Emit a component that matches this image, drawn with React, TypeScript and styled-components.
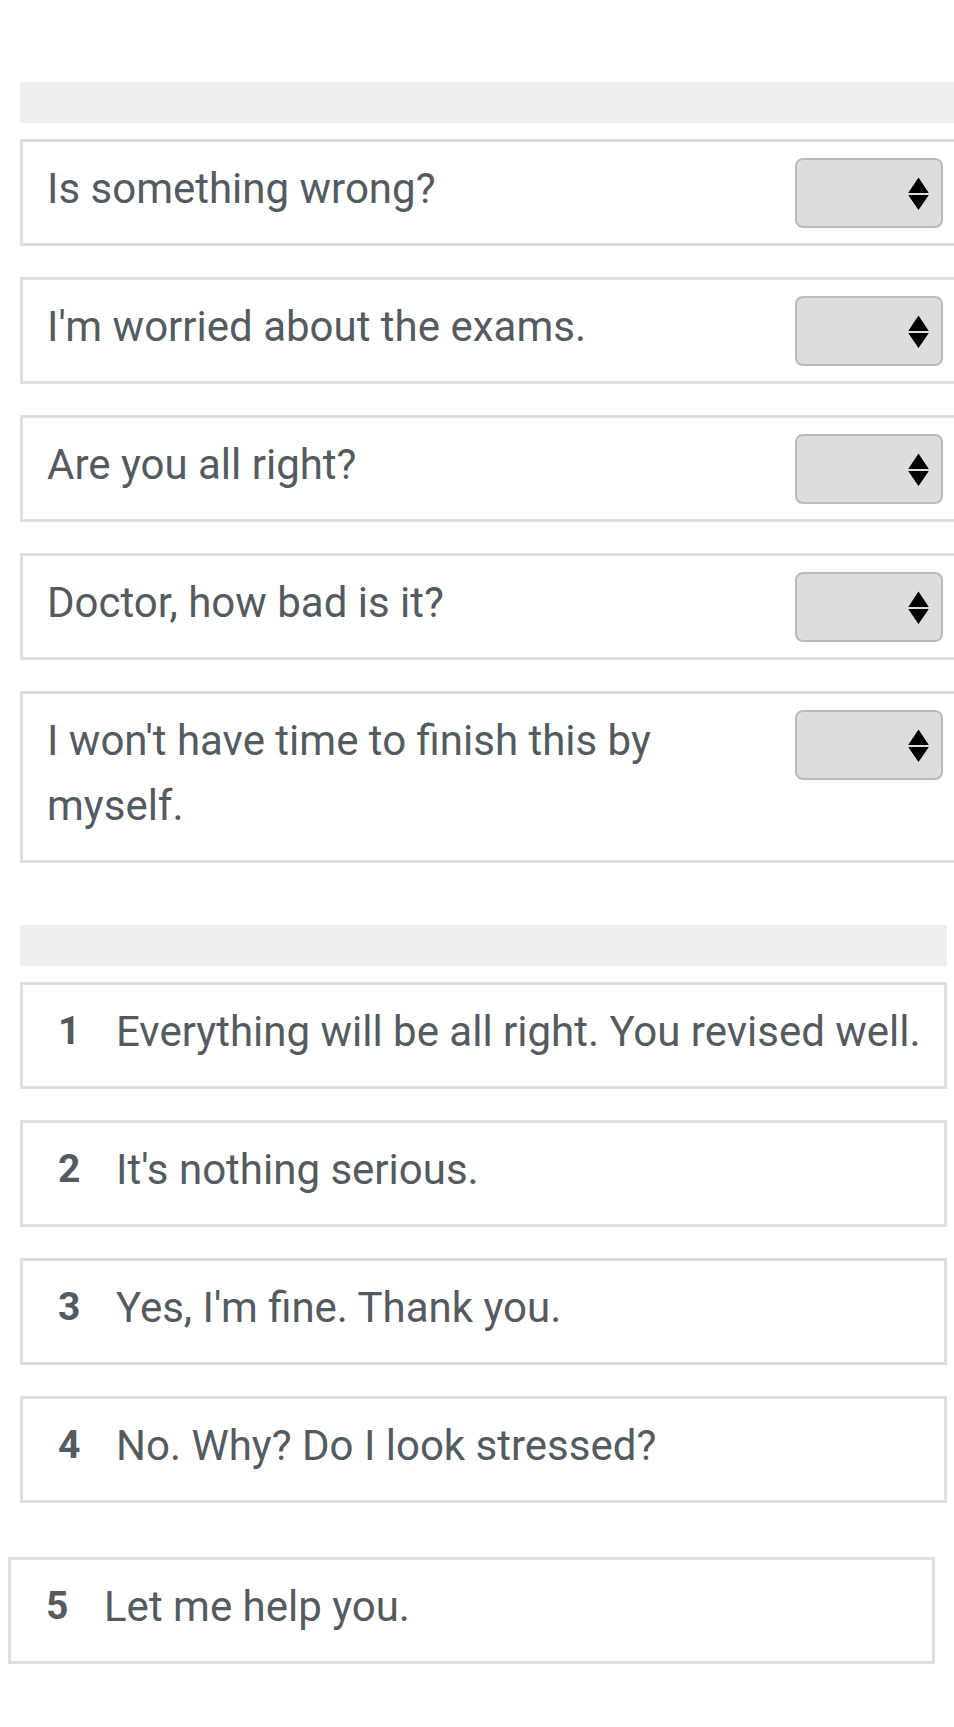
import React from "react";
import styled, { createGlobalStyle } from "styled-components";

const Global = createGlobalStyle`
  html, body {
    margin: 0;
    padding: 0;
    background: #ffffff;
    overflow-x: hidden;
  }
  body {
    font-family: Roboto, "Noto Sans", Arial, sans-serif;
    color: #535b61;
  }
`;

const Page = styled.div`
  width: 954px;
  overflow: hidden;
  padding: 82px 0 60px 20px;
  box-sizing: border-box;
`;

const Section = styled.section<{ $width: number }>`
  width: ${(p) => p.$width}px;
  display: flex;
  flex-direction: column;
  gap: 31px;
`;

const HeaderBar = styled.div`
  height: 41px;
  background: #eeeeee;
  margin-bottom: -15px;
`;

const QuestionRow = styled.div`
  display: flex;
  align-items: flex-start;
  border: 3px solid #dedede;
  background: #ffffff;
`;

const Prompt = styled.div`
  flex: 1;
  padding: 14px 40px 22px 24px;
  font-size: 42px;
  line-height: 65px;
  color: #535b61;
`;

const SelectBox = styled.div`
  flex: none;
  width: 148px;
  height: 70px;
  box-sizing: border-box;
  margin: 16px 14px 0 0;
  border: 2px solid #bababa;
  border-radius: 8px;
  background: #dddddd;
  display: flex;
  align-items: center;
  justify-content: flex-end;
  padding-right: 12px;
`;

const AnswerRow = styled.div<{ $shift?: number }>`
  display: flex;
  align-items: center;
  height: 107px;
  box-sizing: border-box;
  border: 3px solid #dedede;
  background: #ffffff;
  padding: 0 20px 8px 35px;
  margin: ${(p) => (p.$shift ? 23 : 0)}px ${(p) => p.$shift ?? 0}px 0
    ${(p) => -(p.$shift ?? 0)}px;
`;

const Num = styled.span`
  flex: none;
  width: 58px;
  font-size: 39px;
  font-weight: 700;
  line-height: 65px;
  color: #535b61;
`;

const AnswerText = styled.span`
  font-size: 42px;
  line-height: 65px;
  color: #535b61;
  white-space: nowrap;
`;

const Spacer = styled.div`
  height: 62px;
`;

const Arrows = () => (
  <svg width="21" height="33" viewBox="0 0 21 33">
    <path d="M10.5 0.5 L20.5 15.5 Q21 16 20 16 L1 16 Q0 16 0.5 15.5 Z" fill="#000" />
    <path d="M1 18 L20 18 Q21 18 20.5 18.5 L10.5 33 L0.5 18.5 Q0 18 1 18 Z" fill="#000" />
  </svg>
);

const questions = [
  "Is something wrong?",
  "I'm worried about the exams.",
  "Are you all right?",
  "Doctor, how bad is it?",
  "I won't have time to finish this by myself.",
];

const answers = [
  "Everything will be all right. You revised well.",
  "It's nothing serious.",
  "Yes, I'm fine. Thank you.",
  "No. Why? Do I look stressed?",
  "Let me help you.",
];

export default function App() {
  return (
    <>
      <Global />
      <Page>
        <Section $width={940}>
          <HeaderBar />
          {questions.map((q) => (
            <QuestionRow key={q}>
              <Prompt>{q}</Prompt>
              <SelectBox>
                <Arrows />
              </SelectBox>
            </QuestionRow>
          ))}
        </Section>
        <Spacer />
        <Section $width={927}>
          <HeaderBar />
          {answers.map((a, i) => (
            <AnswerRow key={a} $shift={i === 4 ? 12 : 0}>
              <Num>{i + 1}</Num>
              <AnswerText>{a}</AnswerText>
            </AnswerRow>
          ))}
        </Section>
      </Page>
    </>
  );
}
